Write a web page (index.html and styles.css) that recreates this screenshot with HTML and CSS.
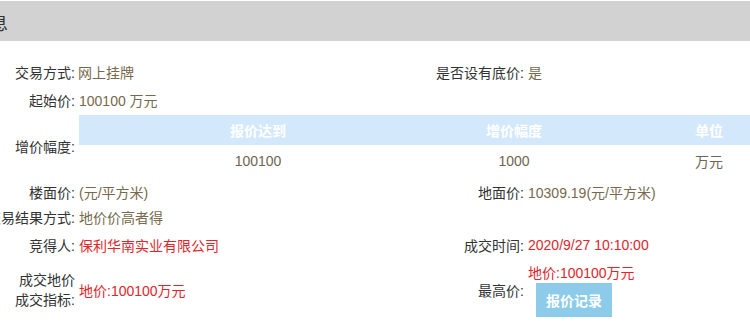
FILE: index.html
```html
<!DOCTYPE html>
<html lang="zh-CN">
<head>
    <meta charset="UTF-8">
    <meta name="viewport" content="width=device-width, initial-scale=1.0">
    <title>成交信息</title>
    <link rel="stylesheet" href="styles.css">
</head>
<body>
    <!-- Panel title -->
    <div class="panel-title"><span class="panel-title-text">息</span></div>

    <!-- Trade info -->
    <div class="info-grid">
        <div class="label">交易方式:</div>
        <div class="value">网上挂牌</div>
        <div class="label">是否设有底价:</div>
        <div class="value">是</div>

        <div class="label">起始价:</div>
        <div class="value wide">100100 万元</div>

        <div class="label">增价幅度:</div>
        <div class="value wide">
            <div class="step-table">
                <div class="step-head">报价达到</div>
                <div class="step-head">增价幅度</div>
                <div class="step-head">单位</div>
                <div class="step-cell">100100</div>
                <div class="step-cell">1000</div>
                <div class="step-cell">万元</div>
            </div>
        </div>

        <div class="label">楼面价:</div>
        <div class="value">(元/平方米)</div>
        <div class="label">地面价:</div>
        <div class="value">10309.19(元/平方米)</div>

        <div class="label">交易结果方式:</div>
        <div class="value wide">地价价高者得</div>

        <div class="label">竞得人:</div>
        <div class="value red">保利华南实业有限公司</div>
        <div class="label">成交时间:</div>
        <div class="value red">2020/9/27 10:10:00</div>

        <div class="label two-line">成交地价<br>成交指标:</div>
        <div class="value red">地价:100100万元</div>
        <div class="label">最高价:</div>
        <div class="value stack">
            <span class="red">地价:100100万元</span>
            <button class="record-btn">报价记录</button>
        </div>
    </div>
</body>
</html>
```

FILE: styles.css
```css
body {
    font-family: "Liberation Sans", "Noto Sans CJK SC", sans-serif;
    font-size: 14px;
    color: #333;
    margin: 0;
    padding: 0;
    width: 750px;
    height: 329px;
    overflow: hidden;
    background-color: #fff;
}

/* Panel title bar */
.panel-title {
    margin-top: 1px;
    height: 40px;
    line-height: 46px;
    background-color: #d2d2d2;
    overflow: hidden;
}

.panel-title-text {
    display: inline-block;
    margin-left: -10px;
    font-size: 18px;
    color: #333;
}

/* Info grid */
.info-grid {
    margin-top: 17px;
    display: grid;
    grid-template-columns: 75px 375px 74px 1fr;
    grid-template-rows: 28px 28px 64px 28px 22px 34px 56px;
}

.label {
    display: flex;
    justify-content: flex-end;
    align-items: center;
    white-space: nowrap;
    color: #333;
}

.two-line {
    line-height: 20px;
    text-align: right;
}

.value {
    display: flex;
    align-items: center;
    padding-left: 3px;
    white-space: nowrap;
    color: #77694c;
    min-width: 0;
}

.label + .value + .label + .value {
    padding-left: 4px;
}

.wide {
    grid-column: span 3;
}

.red {
    color: #e0262b;
}

.stack {
    flex-direction: column;
    align-items: flex-start;
    justify-content: center;
    line-height: 20px;
}

.record-btn {
    margin-left: 8px;
    width: 76px;
    height: 34px;
    border: none;
    background-color: #8ccbe9;
    color: #fff;
    font-family: "Liberation Sans", "Noto Sans CJK SC", sans-serif;
    font-size: 14px;
    font-weight: bold;
    padding: 0;
    cursor: pointer;
}

/* Price step table */
.step-table {
    display: grid;
    grid-template-columns: 358px 154px 236px;
    grid-template-rows: 30px 32px;
    flex-shrink: 0;
}

.step-head {
    background-color: #d4e8fb;
    color: #fff;
    font-weight: bold;
    display: flex;
    justify-content: center;
    align-items: center;
}

.step-cell {
    color: #6f6552;
    display: flex;
    justify-content: center;
    align-items: center;
}
```
